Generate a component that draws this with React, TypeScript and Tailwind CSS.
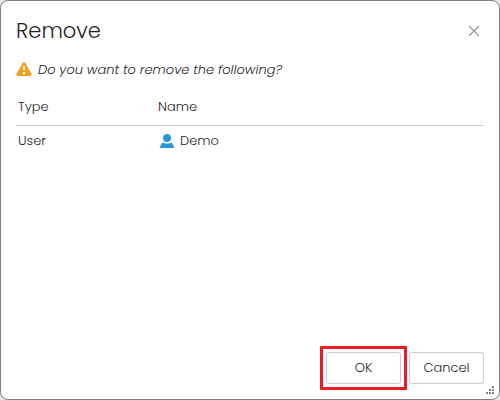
import React, { useState } from 'react';

type RemoveItem = {
  id: number;
  type: string;
  name: string;
};

const items: RemoveItem[] = [{ id: 1, type: 'User', name: 'Demo' }];

const WarningIcon = () => (
  <svg width="16" height="16" viewBox="0 0 16 16" aria-hidden="true">
    <path
      d="M8 0c.6 0 1 .3 1.300.8l6.200 11c.5 1-.1 2.200-1.200 2.200H1.700C.6 14 0 12.800.5 11.800l6.200-11C7 .3 7.400 0 8 0z"
      fill="#f5a023"
    />
    <path d="M7 4h2v4H7zM7 10h2v2H7z" fill="#fff" />
  </svg>
);

const UserIcon = () => (
  <svg width="14" height="14" viewBox="0 0 14 14" aria-hidden="true">
    <circle cx="7" cy="4" r="4" fill="#2796d6" />
    <path
      d="M0 14c0-2.600 1.300-4.800 3.400-5.600C4.400 9.200 5.600 9.600 7 9.600s2.600-.4 3.600-1.200C12.700 9.200 14 11.400 14 14z"
      fill="#2796d6"
    />
  </svg>
);

const ResizeGrip = () => (
  <svg
    className="absolute right-[5px] bottom-[5px] cursor-se-resize"
    width="8"
    height="8"
    viewBox="0 0 8 8"
    shapeRendering="crispEdges"
    aria-hidden="true"
  >
    <path
      d="M6 0h2v2H6zM3 3h2v2H3zM6 3h2v2H6zM0 6h2v2H0zM3 6h2v2H3zM6 6h2v2H6z"
      fill="#808080"
    />
  </svg>
);

const RemoveDialog = ({ onClose }: { onClose: () => void }) => {
  return (
    <div
      role="dialog"
      aria-labelledby="remove-title"
      className="relative flex flex-1 flex-col rounded-lg border border-[#808080] bg-white p-[15px]"
    >
      <div className="flex h-[30px] items-center justify-between">
        <h1 id="remove-title" className="text-[21px] leading-8">
          Remove
        </h1>
        <button
          type="button"
          aria-label="Close"
          className="flex h-5 w-5 items-center justify-center"
          onClick={onClose}
        >
          <svg width="10" height="10" viewBox="0 0 10 10" aria-hidden="true">
            <path
              d="M0 0l10 10M10 0L0 10"
              stroke="#888888"
              strokeWidth="1.2"
              fill="none"
            />
          </svg>
        </button>
      </div>
      <p className="mt-[14px] flex h-5 items-center gap-[6px] italic">
        <WarningIcon />
        Do you want to remove the following?
      </p>
      <table className="mt-[9px] w-full table-fixed text-left">
        <thead>
          <tr className="border-b border-[#cccccc]">
            <th className="h-9 w-[140px] px-[2px] font-light">Type</th>
            <th className="h-9 px-[2px] font-light">Name</th>
          </tr>
        </thead>
        <tbody>
          {items.map((item) => (
            <tr key={item.id}>
              <td className="h-[31px] px-[2px]">{item.type}</td>
              <td className="h-[31px] px-[2px]">
                <span className="flex items-center gap-[6px] pl-[2px]">
                  <UserIcon />
                  {item.name}
                </span>
              </td>
            </tr>
          ))}
        </tbody>
      </table>
      <div className="mt-auto flex justify-end gap-2">
        <div className="outline-3 outline-offset-3 outline-[#ed1c24]">
          <button
            type="button"
            className="block h-8 w-[75px] rounded-[3px] border border-[#cccccc]"
            onClick={onClose}
          >
            OK
          </button>
        </div>
        <button
          type="button"
          className="h-8 w-[75px] rounded-[3px] border border-[#cccccc]"
          onClick={onClose}
        >
          Cancel
        </button>
      </div>
      <ResizeGrip />
    </div>
  );
};

const App = () => {
  const [isOpen, setIsOpen] = useState<boolean>(true);

  return (
    <main className="flex min-h-screen bg-[#e6e6e6] font-['Poppins','Inter',sans-serif] text-[13px] leading-5 font-light text-[#1f1f1f]">
      {isOpen && <RemoveDialog onClose={() => setIsOpen(false)} />}
    </main>
  );
};

export default App;
